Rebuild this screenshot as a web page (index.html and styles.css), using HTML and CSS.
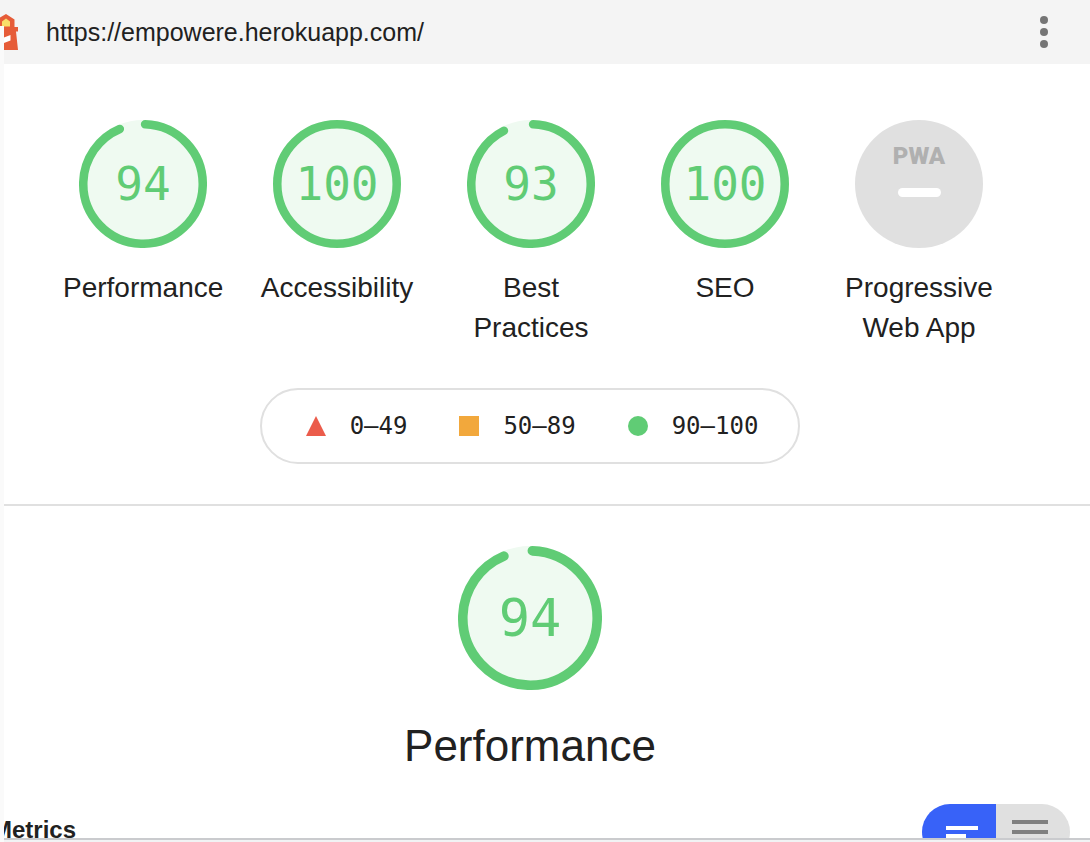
FILE: index.html
```html
<!DOCTYPE html>
<html lang="en">
<head>
<meta charset="utf-8">
<meta name="viewport" content="width=device-width, initial-scale=1">
<title>Lighthouse Report</title>
<link rel="stylesheet" href="styles.css">
</head>
<body>
<header class="topbar">
  <svg class="topbar-logo" viewBox="0 0 20 36" aria-hidden="true">
    <path d="M6 0L14.500 5.500V13H18V17.500H16L18 36H0V0Z" fill="#e65c38"/>
    <path d="M0 0H6L0 3.500Z" fill="#f4f4f4"/>
    <path d="M6 4.500L10 7.500V12.500H2V7.500Z" fill="#f9de6a"/>
    <path d="M0 25L10.500 21V26.500L0 30.500Z" fill="#fff"/>
  </svg>
  <a class="topbar-url" href="https://empowere.herokuapp.com/">https://empowere.herokuapp.com/</a>
  <button class="topbar-menu" type="button" aria-label="Tools menu">
    <svg class="topbar-dots" viewBox="0 0 8 32" aria-hidden="true"><circle cx="4" cy="4" r="4"/><circle cx="4" cy="16" r="4"/><circle cx="4" cy="28" r="4"/></svg>
  </button>
</header>
<div class="gutter"></div>
<main class="report">
  <nav class="scores" aria-label="Categories">
    <a class="gauge" href="#performance">
      <span class="dial"><svg class="ring" viewBox="0 0 120 120" aria-hidden="true"><circle class="ring-base" cx="60" cy="60" r="60"/><circle class="ring-arc" cx="60" cy="60" r="56" transform="rotate(-88 60 60)" stroke-dasharray="327 352"/></svg><span class="score">94</span></span>
      <span class="gauge-label">Performance</span>
    </a>
    <a class="gauge" href="#accessibility">
      <span class="dial"><svg class="ring" viewBox="0 0 120 120" aria-hidden="true"><circle class="ring-base" cx="60" cy="60" r="60"/><circle class="ring-arc" cx="60" cy="60" r="56"/></svg><span class="score">100</span></span>
      <span class="gauge-label">Accessibility</span>
    </a>
    <a class="gauge" href="#best-practices">
      <span class="dial"><svg class="ring" viewBox="0 0 120 120" aria-hidden="true"><circle class="ring-base" cx="60" cy="60" r="60"/><circle class="ring-arc" cx="60" cy="60" r="56" transform="rotate(-88 60 60)" stroke-dasharray="323 352"/></svg><span class="score">93</span></span>
      <span class="gauge-label">Best Practices</span>
    </a>
    <a class="gauge" href="#seo">
      <span class="dial"><svg class="ring" viewBox="0 0 120 120" aria-hidden="true"><circle class="ring-base" cx="60" cy="60" r="60"/><circle class="ring-arc" cx="60" cy="60" r="56"/></svg><span class="score">100</span></span>
      <span class="gauge-label">SEO</span>
    </a>
    <a class="gauge" href="#pwa">
      <span class="dial dial-pwa"><span class="pwa-name">PWA</span><span class="pwa-dash"></span></span>
      <span class="gauge-label">Progressive Web App</span>
    </a>
  </nav>
  <div class="scale-row">
    <ul class="scale">
      <li class="range"><svg class="mark" viewBox="0 0 20 20" aria-hidden="true"><path d="M10 0L20 20H0Z" fill="#eb5c4b"/></svg>0–49</li>
      <li class="range"><svg class="mark" viewBox="0 0 20 20" aria-hidden="true"><path d="M0 0H20V20H0Z" fill="#f2a83c"/></svg>50–89</li>
      <li class="range"><svg class="mark" viewBox="0 0 20 20" aria-hidden="true"><circle cx="10" cy="10" r="10" fill="#60cc75"/></svg>90–100</li>
    </ul>
  </div>
  <section class="category" id="performance">
    <div class="category-head">
      <span class="dial dial-large"><svg class="ring" viewBox="0 0 120 120" aria-hidden="true"><circle class="ring-base" cx="60" cy="60" r="60"/><circle class="ring-arc" cx="60" cy="60" r="56" transform="rotate(-88 60 60)" stroke-dasharray="327 352"/></svg><span class="score">94</span></span>
      <h1 class="category-title">Performance</h1>
    </div>
    <div class="metrics">
      <h2 class="metrics-title">Metrics</h2>
      <div class="toggle">
        <button class="toggle-option toggle-active" type="button" aria-pressed="true" aria-label="Compact view"><svg class="toggle-icon" viewBox="0 0 44 24" aria-hidden="true"><path d="M9 6H41V10H9ZM9 14H29V18H9Z"/></svg></button>
        <button class="toggle-option" type="button" aria-pressed="false" aria-label="Expanded view"><svg class="toggle-icon" viewBox="0 0 44 24" aria-hidden="true"><path d="M1 0H37V4H1ZM1 10H37V14H1ZM1 20H37V24H1Z"/></svg></button>
      </div>
    </div>
  </section>
</main>
<footer class="edge"></footer>
</body>
</html>
```
FILE: styles.css
```css
* {
  box-sizing: border-box;
}

body {
  position: relative;
  display: flex;
  flex-direction: column;
  height: 100vh;
  margin: 0;
  overflow: hidden;
  background: #fff;
  color: #212121;
  font-family: "Liberation Sans", Arial, sans-serif;
}

a {
  color: inherit;
  text-decoration: none;
}

button {
  padding: 0;
  border: 0;
  background: none;
}

.topbar {
  display: flex;
  flex: none;
  align-items: center;
  height: 64px;
  padding-right: 32px;
  background: #f4f4f4;
}

.topbar-logo {
  width: 20px;
  height: 36px;
}

.topbar-url {
  margin-left: 26px;
  font-size: 25px;
  line-height: 32px;
}

.topbar-menu {
  display: grid;
  place-items: center;
  width: 28px;
  height: 48px;
  margin-left: auto;
}

.topbar-dots {
  width: 8px;
  height: 32px;
  fill: #757575;
}

/* Edge of the neighbouring panel, lying over the toolbar */
.gutter {
  position: absolute;
  top: 26px;
  bottom: 0;
  left: 0;
  width: 4px;
  background: #fafafa;
}

.report {
  flex: 1;
  min-height: 0;
  margin-left: 4px;
  overflow: hidden;
}

.scores {
  display: flex;
  justify-content: center;
  padding: 56px 32px 40px 0;
}

.gauge {
  display: flex;
  flex: 0 1 194px;
  flex-direction: column;
  align-items: center;
  gap: 20px;
}

.gauge-label {
  max-width: 160px;
  font-size: 28px;
  line-height: 40px;
  text-align: center;
}

.dial {
  display: grid;
  place-items: center;
  width: 128px;
  height: 128px;
  color: #60cc75;
  font-family: "DejaVu Sans Mono", monospace;
  font-size: 46px;
}

.dial-large {
  width: 144px;
  height: 144px;
  font-size: 52px;
}

.ring,
.score {
  grid-area: 1 / 1;
}

.ring {
  width: 100%;
  height: 100%;
}

.ring-base {
  fill: #effaf1;
}

.ring-arc {
  fill: none;
  stroke: #60cc75;
  stroke-width: 8px;
  stroke-linecap: round;
}

.dial-pwa {
  align-content: start;
  gap: 20px;
  padding-top: 24px;
  border-radius: 50%;
  background: #e0e0e0;
}

.pwa-name {
  color: #b0b0b0;
  font: 900 24px/24px Roboto, sans-serif;
}

.pwa-dash {
  width: 43px;
  height: 9px;
  border-radius: 5px;
  background: #fff;
}

.scale-row {
  display: flex;
  justify-content: center;
  padding-right: 34px;
}

.scale {
  display: flex;
  gap: 52px;
  margin: 0;
  padding: 20px 40px 20px 44px;
  border: 2px solid #e0e0e0;
  border-radius: 38px;
  list-style: none;
  font-family: "DejaVu Sans Mono", monospace;
  font-size: 24px;
  line-height: 32px;
}

.range {
  display: flex;
  align-items: center;
  gap: 24px;
}

.mark {
  width: 20px;
  height: 20px;
}

.category {
  margin-top: 40px;
  border-top: 2px solid #e0e0e0;
}

.category-head {
  display: flex;
  flex-direction: column;
  align-items: center;
  gap: 28px;
  padding: 40px 34px 0 0;
}

.category-title {
  margin: 0;
  font-size: 44px;
  font-weight: 400;
  line-height: 56px;
}

.metrics {
  display: flex;
  justify-content: space-between;
  margin: 30px 20px 0 -12px;
}

.metrics-title {
  margin: 0;
  font-size: 24px;
  line-height: 52px;
}

.toggle {
  display: flex;
  border-radius: 28px;
  overflow: hidden;
}

.toggle-option {
  display: grid;
  place-items: center;
  width: 74px;
  height: 56px;
  background: #e0e0e0;
  color: #808080;
}

.toggle-active {
  background: #3862f8;
  color: #fff;
}

.toggle-icon {
  width: 44px;
  height: 24px;
  fill: currentColor;
}

.edge {
  position: relative;
  flex: none;
  height: 4px;
  margin-left: 4px;
  border-top: 2px solid #cacbce;
  background: #f1f3f4;
}
```
